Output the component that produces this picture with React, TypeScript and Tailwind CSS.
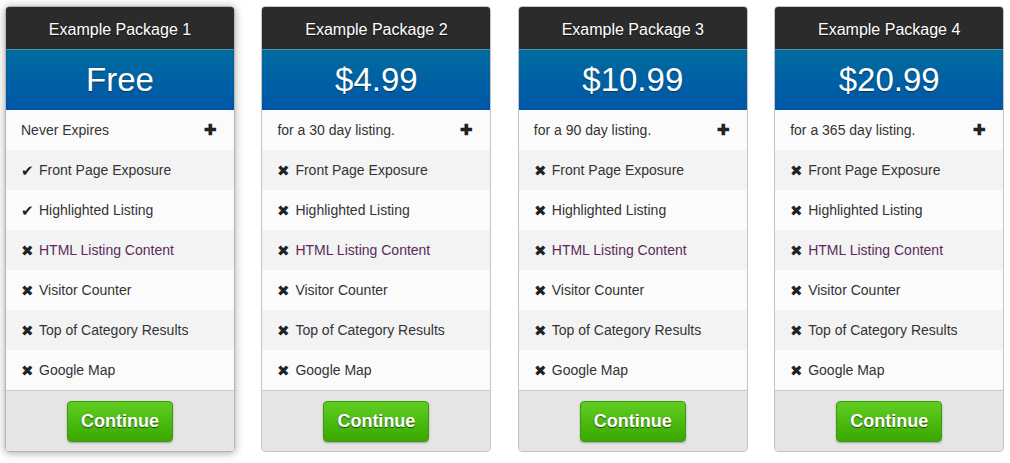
import React from 'react';

type Pkg = {
    name: string;
    price: string;
    note: string;
    featured?: boolean;
    checks: boolean[];
};

const features = [
    'Front Page Exposure',
    'Highlighted Listing',
    'HTML Listing Content',
    'Visitor Counter',
    'Top of Category Results',
    'Google Map',
];

const packages: Pkg[] = [
    { name: 'Example Package 1', price: 'Free', note: 'Never Expires', featured: true, checks: [true, true, false, false, false, false] },
    { name: 'Example Package 2', price: '$4.99', note: 'for a 30 day listing.', checks: [false, false, false, false, false, false] },
    { name: 'Example Package 3', price: '$10.99', note: 'for a 90 day listing.', checks: [false, false, false, false, false, false] },
    { name: 'Example Package 4', price: '$20.99', note: 'for a 365 day listing.', checks: [false, false, false, false, false, false] },
];

function Card({ pkg }: { pkg: Pkg }) {
    return (
        <div
            className={`w-[230px] shrink-0 rounded-[4px] border overflow-hidden ${pkg.featured
                ? 'border-[#b5b5b5] shadow-[0_1px_8px_rgba(0,0,0,0.35)]'
                : 'border-[#c4c4c4]'
                }`}
        >
            {/* Header */}
            <div className="h-[43px] pt-[4px] bg-[#2b2b2b] border-b border-[#4a8fb5] flex items-center justify-center text-white text-[16px] [text-shadow:0_1px_1px_rgba(0,0,0,0.6)]">
                {pkg.name}
            </div>

            {/* Price */}
            <div className="h-[60px] bg-gradient-to-b from-[#006b9e] to-[#0056a8] flex items-center justify-center text-white text-[33px] [text-shadow:0_1px_1px_rgba(0,0,0,0.4)]">
                {pkg.price}
            </div>

            {/* Note row */}
            <div className="h-[40px] bg-[#fbfbfb] flex items-center justify-between pl-[15px] pr-[17px] text-[14px] text-[#333]">
                <span>{pkg.note}</span>
                <span className="text-[15px] font-bold text-[#222]">✚</span>
            </div>

            {/* Features */}
            {features.map((f, i) => (
                <div
                    key={f}
                    className={`h-[40px] flex items-center pl-[15px] text-[14px] ${i % 2 === 0 ? 'bg-[#f3f3f3]' : 'bg-[#fbfbfb]'}`}
                >
                    <span className="w-[18px] text-[15px] leading-none text-[#222]">{pkg.checks[i] ? '✔' : '✖'}</span>
                    <span className={i === 2 ? 'text-[#5b2a5b]' : 'text-[#333]'}>{f}</span>
                </div>
            ))}

            {/* Footer */}
            <div className="h-[61px] pt-[1px] bg-[#e5e5e5] border-t border-[#c9c9c9] flex items-center justify-center">
                <button className="h-[41px] w-[106px] rounded-[4px] border border-[#3a9a0a] bg-gradient-to-b from-[#5fcd1f] to-[#3aa800] text-white font-bold text-[18px] shadow-[0_1px_2px_rgba(0,0,0,0.3)] [text-shadow:0_1px_1px_rgba(0,0,0,0.6)]">
                    Continue
                </button>
            </div>
        </div>
    );
}

export default function App() {
    return (
        <div className="w-[1010px] h-[463px] bg-white font-['Liberation_Sans',Arial,sans-serif]">
            <div className="flex gap-[26.4px] px-[5px] pt-[6px]">
                {packages.map((p) => (
                    <Card key={p.name} pkg={p} />
                ))}
            </div>
        </div>
    );
}
